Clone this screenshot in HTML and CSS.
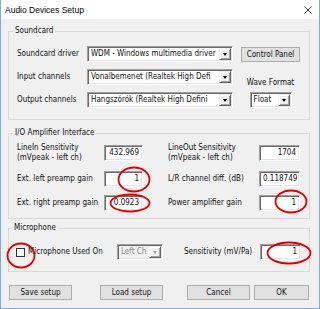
FILE: index.html
```html
<!DOCTYPE html>
<html>
<head>
<meta charset="utf-8">
<link rel="stylesheet" href="styles.css">
</head>
<body>
<div class="window">
  <div class="titlebar">
    <span class="title">Audio Devices Setup</span>
    <svg class="close" width="8" height="8" viewBox="0 0 8 8"><path d="M0.5 0.5L7.5 7.5M7.5 0.5L0.5 7.5" stroke="#222" stroke-width="0.9" fill="none"/></svg>
  </div>
  <div class="client">
    <fieldset class="group sound">
      <legend>Soundcard</legend>
      <div class="sound-grid">
        <span class="lbl c1">Soundcard driver</span>
        <div class="combo c2"><span class="val">WDM - Windows multimedia driver</span><span class="drop"><i></i></span></div>
        <button class="btn c4">Control Panel</button>
        <span class="lbl c1">Input channels</span>
        <div class="combo c2"><span class="val">Vonalbemenet (Realtek High Defi</span><span class="drop"><i></i></span></div>
        <span class="lbl c4 wave">Wave Format</span>
        <span class="lbl c1">Output channels</span>
        <div class="combo c2"><span class="val">Hangszórók (Realtek High Defini</span><span class="drop"><i></i></span></div>
        <div class="combo c4 float"><span class="val">Float</span><span class="drop"><i></i></span></div>
      </div>
    </fieldset>
    <fieldset class="group io">
      <legend>I/O Amplifier Interface</legend>
      <div class="io-grid">
        <span class="lbl">LineIn Sensitivity<br>(mVpeak - left ch)</span>
        <div class="edit">432.969</div>
        <span class="lbl r">LineOut Sensitivity<br>(mVpeak - left ch)</span>
        <div class="edit">1704</div>
        <span class="lbl">Ext. left preamp gain</span>
        <div class="edit">1</div>
        <span class="lbl r">L/R channel diff. (dB)</span>
        <div class="edit">0.118749</div>
        <span class="lbl">Ext. right preamp gain</span>
        <div class="edit">0.0923</div>
        <span class="lbl r">Power amplifier gain</span>
        <div class="edit">1</div>
      </div>
    </fieldset>
    <fieldset class="group mic">
      <legend>Microphone</legend>
      <div class="mic-row">
        <span class="check"></span>
        <span class="lbl mic-lbl">Microphone Used On</span>
        <div class="combo disabled"><span class="val">Left Ch</span><span class="drop"><i></i></span></div>
        <span class="lbl sens">Sensitivity (mV/Pa)</span>
        <div class="edit">1</div>
      </div>
    </fieldset>
    <div class="buttons">
      <button class="btn b-save">Save setup</button>
      <button class="btn b-load">Load setup</button>
      <button class="btn b-cancel">Cancel</button>
      <button class="btn b-ok">OK</button>
    </div>
  </div>
  <svg class="marks" width="320" height="309" viewBox="0 0 320 309">
    <g fill="none" stroke="#e00000" stroke-width="1.8">
      <ellipse cx="134" cy="179.5" rx="15.5" ry="12"/>
      <ellipse cx="130" cy="203" rx="19.5" ry="8.5"/>
      <ellipse cx="291" cy="201.5" rx="15.5" ry="11"/>
      <ellipse cx="21" cy="255.5" rx="13.5" ry="12"/>
      <ellipse cx="289" cy="253" rx="21.5" ry="10.5"/>
    </g>
  </svg>
</div>
</body>
</html>
```

FILE: styles.css
```css
* { box-sizing: border-box; }
html, body { margin: 0; padding: 0; background: #fff; }
body {
  font-family: "DejaVu Sans Condensed", "Liberation Sans", Arial, sans-serif;
  font-size: 8px;
  color: #111;
}
.window {
  position: relative;
  width: 320px;
  height: 309px;
  border: 1px solid #7ea9d8;
  border-top: none;
  display: flex;
  flex-direction: column;
  overflow: hidden;
}
.titlebar {
  height: 19px;
  background: #fff;
  display: flex;
  align-items: center;
  justify-content: space-between;
  padding: 0 7px 0 4px;
  flex: none;
}
.title {
  font-family: "Liberation Sans", Arial, sans-serif;
  font-size: 8.5px;
  color: #000;
  padding-top: 1px;
}
.close { display: block; margin-top: 1px; }
.client {
  flex: 1;
  background: #f0f0f0;
  padding-top: 7px;
}
.group {
  margin: 0 9px 0 7px;
  border: 1px solid #d9d9d9;
  padding: 0 8px;
  min-width: 0;
}
.group legend {
  font-size: 8px;
  line-height: 10px;
  padding: 0 2px;
  margin-left: -4px;
  color: #111;
}
.lbl { line-height: 10px; white-space: nowrap; }

/* Soundcard */
.sound { padding-top: 10px; padding-bottom: 11px; }
.sound-grid {
  display: grid;
  grid-template-columns: 70px 146px 8px 59px;
  grid-template-rows: 16px 16px 16px;
  row-gap: 7px;
  align-items: center;
}
.c1 { grid-column: 1; }
.c2 { grid-column: 2; }
.c4 { grid-column: 4; justify-self: center; }
.wave { align-self: end; margin-bottom: -3px; }

.combo {
  height: 16px;
  background: #fff;
  border: 1px solid;
  border-color: #a0a0a0 #fff #fff #a0a0a0;
  box-shadow: inset 1px 1px 0 #696969, inset -1px -1px 0 #e3e3e3;
  display: flex;
  align-items: center;
  padding: 1px 2px 1px 2px;
  overflow: hidden;
}
.combo .val {
  flex: 1;
  white-space: nowrap;
  overflow: hidden;
  padding-left: 1px;
  line-height: 10px;
}
.drop {
  flex: none;
  width: 12px;
  height: 12px;
  margin-right: -1px;
  background: #f0f0f0;
  border: 1px solid;
  border-color: #f0f0f0 #696969 #696969 #f0f0f0;
  box-shadow: inset 1px 1px 0 #fff, inset -1px -1px 0 #a0a0a0;
  display: flex;
  align-items: center;
  justify-content: center;
}
.drop i {
  display: block;
  width: 0;
  height: 0;
  border-left: 2.5px solid transparent;
  border-right: 2.5px solid transparent;
  border-top: 3px solid #000;
}
.float { width: 42px; }
.disabled { background: #f0f0f0; width: 46px; }
.disabled .val { color: #8a8a8a; }
.disabled .drop i { border-top-color: #a0a0a0; }

.edit {
  height: 16px;
  background: #fff;
  border: 1px solid;
  border-color: #a0a0a0 #fff #fff #a0a0a0;
  box-shadow: inset 1px 1px 0 #696969, inset -1px -1px 0 #e3e3e3;
  text-align: right;
  padding: 0 3px;
  line-height: 14px;
  white-space: nowrap;
}

/* I/O */
.io { margin-top: 8px; padding-top: 5px; padding-bottom: 7px; }
.io-grid {
  display: grid;
  grid-template-columns: 87px 39px 25px 91px 41px;
  grid-template-rows: 20px 16px 16px;
  row-gap: 8px;
  align-items: center;
}
.io-grid .lbl { grid-column: 1; }
.io-grid .lbl.r { grid-column: 4; }
.io-grid .edit:nth-child(2), .io-grid .edit:nth-child(6), .io-grid .edit:nth-child(10) { grid-column: 2; }
.io-grid .edit:nth-child(4), .io-grid .edit:nth-child(8), .io-grid .edit:nth-child(12) { grid-column: 5; }

/* Microphone */
.mic { margin-top: 4px; padding-top: 11px; padding-bottom: 11px; padding-left: 7px; }
.mic-row {
  display: flex;
  align-items: center;
  height: 16px;
}
.check {
  width: 9px;
  height: 9px;
  border: 1px solid #333;
  background: #fff;
  flex: none;
}
.mic-lbl { margin-left: 3px; width: 89px; }
.sens { margin-left: 21px; width: 76px; }
.mic-row .edit { width: 41px; }

/* buttons */
.btn {
  font-family: inherit;
  font-size: 8px;
  color: #111;
  background: #e1e1e1;
  border: 1px solid #adadad;
  height: 15px;
  padding: 0;
  line-height: 13px;
  border-radius: 0;
}
.sound-grid .btn { width: 59px; }
.buttons {
  display: flex;
  margin: 13px 0 0 8px;
}
.buttons .btn { width: 63px; }
.b-load { margin-left: 28px; }
.b-cancel { margin-left: 24px; }
.b-ok { margin-left: 4px; width: 55px !important; }

.marks {
  position: absolute;
  left: -1px;
  top: 0;
  pointer-events: none;
}
```
